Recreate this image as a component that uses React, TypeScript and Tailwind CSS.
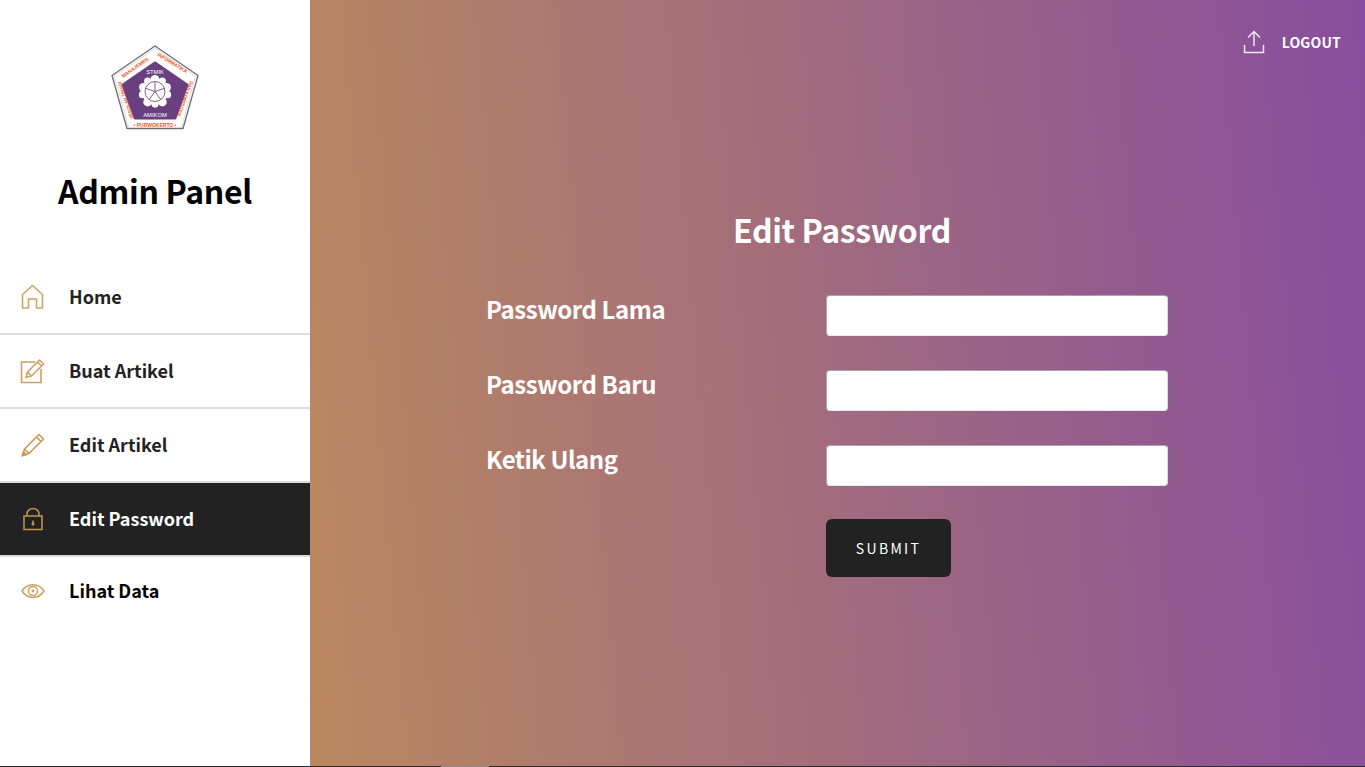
const font = { fontFamily: '"Noto Sans CJK JP", "Noto Sans", sans-serif' };

function Logo() {
  return (
    <svg width="100" height="100" viewBox="0 0 100 100" className="block">
      <defs>
        <path id="ringA" d="M18 38 L46 18.5" />
        <path id="ringB" d="M52 15.5 L86 36.5" />
        <path id="ringC" d="M28.5 78 L15 39" />
        <path id="ringD" d="M85 41 L71 78" />
      </defs>
      <path d="M50 6 L93 35.5 L78 88.5 L22 88.5 L7 35.5 Z" fill="#fff" stroke="#6f6b74" strokeWidth="1.3" strokeLinejoin="round" />
      <path d="M23.5 87 L9.5 36 L50 8.5 L90.5 36 L76.5 87" fill="none" stroke="#c4c1c6" strokeWidth="0.6" strokeLinejoin="round" />
      <path d="M50 23 L82 45 L70 78 L30 78 L18 45 Z" fill="#6a3f80" stroke="#6a3f80" strokeWidth="3" strokeLinejoin="round" />
      <g fontSize="4.9" fontWeight="700" fill="#f0541e" style={{ fontFamily: '"Liberation Sans", sans-serif' }}>
        <text><textPath href="#ringA">MANAJEMEN</textPath></text>
        <text><textPath href="#ringB">INFORMATIKA</textPath></text>
        <text fontSize="4.5"><textPath href="#ringC">SEKOLAH TINGGI</textPath></text>
        <text fontSize="4.5"><textPath href="#ringD">DAN KOMPUTER</textPath></text>
        <text x="50" y="87" textAnchor="middle" fontSize="5">• PURWOKERTO •</text>
      </g>
      <g fontSize="5.8" fill="#fff" textAnchor="middle" style={{ fontFamily: '"Liberation Sans", sans-serif' }}>
        <text x="50" y="34">STMIK</text>
        <text x="50" y="77">AMIKOM</text>
      </g>
      <g transform="translate(50 51.5) scale(1.05) translate(-50 -54)">
        <g fill="#fff">
          <circle cx="50" cy="54" r="12.5" />
          <circle cx="50" cy="42.5" r="4.2" />
          <circle cx="43" cy="44" r="3.4" />
          <circle cx="57" cy="44" r="3.4" />
          <circle cx="61" cy="50" r="4.2" />
          <circle cx="62" cy="57" r="3.4" />
          <circle cx="57" cy="64" r="4.2" />
          <circle cx="50" cy="66" r="3.4" />
          <circle cx="43" cy="64" r="4.2" />
          <circle cx="38" cy="57" r="3.4" />
          <circle cx="39" cy="50" r="4.2" />
        </g>
        <g fill="none" stroke="#6a3f80" strokeWidth="0.8">
          <circle cx="50" cy="54" r="9.5" />
          <path d="M50 54 L50 44.5 M50 54 L59 51 M50 54 L55.5 61.7 M50 54 L44.5 61.7 M50 54 L41 51" />
        </g>
      </g>
    </svg>
  );
}

function HomeIcon() {
  return (
    <svg width="24" height="26" viewBox="0 0 24 26" fill="none" stroke="#d1a264" strokeWidth="1.6">
      <path d="M1.5 10.5 L11.5 1.5 L21.5 10.5 V24 H15.5 V15 H7.5 V24 H1.5 Z" strokeLinejoin="round" />
    </svg>
  );
}

function NoteIcon() {
  return (
    <svg width="26" height="26" viewBox="0 0 26 26" fill="none" stroke="#cf9f63" strokeWidth="1.6">
      <path d="M15 4 H1.5 V24.5 H21 V11" />
      <path d="M6 19.5 L7.5 14 L19.5 2 L23.5 6 L11.5 18 Z M17.5 4 L21.5 8 M7.5 14 L11.5 18" strokeLinejoin="round" />
    </svg>
  );
}

function PencilIcon() {
  return (
    <svg width="24" height="24" viewBox="0 0 24 24" fill="none" stroke="#cc9a57" strokeWidth="1.7">
      <path d="M1.5 22.5 L3.5 16 L18 1.5 L22.5 6 L8 20.5 Z M15.5 4 L20 8.5 M3.5 16 L8 20.5" strokeLinejoin="round" />
      <path d="M1.5 22.5 L2.5 19 L5 21.5 Z" fill="#cc9a57" />
    </svg>
  );
}

function LockIcon() {
  return (
    <svg width="20" height="24" viewBox="0 0 20 24" fill="none" stroke="#c5944f" strokeWidth="1.5">
      <rect x="1" y="9" width="18" height="13.5" />
      <path d="M4 9 V7 a6 5.5 0 0 1 12 0 V9" />
      <path d="M10 13.5 L11.2 18 H8.8 Z" fill="#c5944f" strokeWidth="0.8" />
    </svg>
  );
}

function EyeIcon() {
  return (
    <svg width="24" height="18" viewBox="0 0 24 18" fill="none" stroke="#d1a05c" strokeWidth="1.5">
      <path d="M1 9 C6 0.5 18 0.5 23 9 C18 17.5 6 17.5 1 9 Z" />
      <circle cx="12" cy="9" r="4.5" />
      <circle cx="12" cy="9" r="1.4" fill="#d1a05c" stroke="none" />
    </svg>
  );
}

function UploadIcon() {
  return (
    <svg width="22" height="24" viewBox="0 0 22 24" fill="none" stroke="#f1e6f3" strokeWidth="1.5">
      <path d="M11 16 V2 M5 7.5 L11 1.5 L17 7.5" />
      <path d="M1.5 15 V22.5 H20.5 V15" />
    </svg>
  );
}

const menu = [
  { label: 'Home', icon: <HomeIcon />, rowClass: 'h-[74px] border-b-2 border-[#dddddd] text-[#222222]' },
  { label: 'Buat Artikel', icon: <NoteIcon />, rowClass: 'h-[74px] border-b-2 border-[#dddddd] text-[#222222]' },
  { label: 'Edit Artikel', icon: <PencilIcon />, rowClass: 'h-[74px] border-b-2 border-[#dddddd] text-[#222222]' },
  { label: 'Edit Password', icon: <LockIcon />, rowClass: 'h-[74px] border-b-2 border-[#dddddd] bg-[#222222] text-white' },
  { label: 'Lihat Data', icon: <EyeIcon />, rowClass: 'h-[68px] text-black' },
];

const fields = ['Password Lama', 'Password Baru', 'Ketik Ulang'];

export default function App() {
  return (
    <div className="flex h-[767px] flex-col overflow-hidden bg-white" style={font}>
      <div className="flex min-h-0 flex-1">
        {/* sidebar */}
        <aside className="w-[310px] shrink-0 bg-white">
          <div className="flex justify-center pt-[40px]">
            <Logo />
          </div>
          <h1 className="mt-[25px] text-center text-[32px] font-bold leading-[50px] tracking-[-0.35px] text-black">Admin Panel</h1>
          <nav className="mt-[46px]">
            {menu.map(m => (
              <div key={m.label} className={`flex items-center ${m.rowClass}`}>
                <span className="flex w-[69px] shrink-0 justify-center pr-[3px]">{m.icon}</span>
                <span className="pb-[2px] text-[18px] font-bold leading-none">{m.label}</span>
              </div>
            ))}
          </nav>
        </aside>

        {/* content */}
        <main className="flex min-w-0 flex-1 flex-col bg-[linear-gradient(85deg,#ba885f,#884d9e)]">
          <div className="flex h-[83px] items-center justify-end gap-[17px] pr-[24px]">
            <UploadIcon />
            <span className="text-[14px] font-bold leading-none tracking-[0.15px] text-white">LOGOUT</span>
          </div>
          <h2 className="mt-[121px] pl-[423px] text-[32px] font-bold leading-[50px] tracking-[-0.35px] text-white">Edit Password</h2>
          <form className="mt-[41px] flex flex-col gap-[34px] pl-[176px]">
            {fields.map(f => (
              <div key={f} className="flex items-start">
                <label className="w-[340px] text-[24px] font-bold leading-[28px] tracking-[-0.45px] text-white">{f}</label>
                <input
                  type="password"
                  className="h-[41px] w-[342px] rounded-[4px] border border-t-[#a9a5ab] border-r-[#d8d8d8] border-b-[#e8e8e8] border-l-[#a9a5ab] bg-white outline-none"
                />
              </div>
            ))}
            <div className="-mt-px pl-[340px]">
              <button
                type="button"
                className="h-[58px] w-[125px] rounded-[6px] bg-[#222222] text-[14px] leading-none tracking-[2.3px] text-white"
              >
                SUBMIT
              </button>
            </div>
          </form>
        </main>
      </div>

      {/* strip at the bottom edge */}
      <div className="flex h-px shrink-0 bg-[#2a2a2a]">
        <div className="ml-[441px] w-[48px] bg-[#8a8a8a]" />
      </div>
    </div>
  );
}
